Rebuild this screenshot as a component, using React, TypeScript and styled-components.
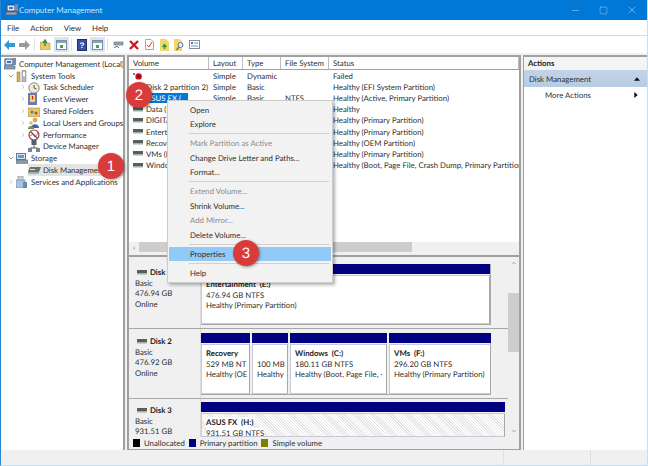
import React from 'react';
import styled, { createGlobalStyle } from 'styled-components';
import { ChevronDown, ChevronRight, Minus, Square, X } from 'lucide-react';

const Global = createGlobalStyle`
  html, body { margin: 0; padding: 0; background: #fff; }
  * { box-sizing: border-box; }
  body { text-rendering: geometricPrecision; }
`;

const AppIcon = () => (
  <svg width="12" height="12" viewBox="0 0 12 12">
    <rect x="1" y="1" width="8" height="6" fill="#dfe8f4" stroke="#33507c" />
    <rect x="3" y="3" width="4" height="2" fill="#3f79c4" />
    <rect x="0" y="8" width="11" height="3" fill="#8fa0b8" stroke="#46597a" strokeWidth=".6" />
    <rect x="9" y="0" width="3" height="7" fill="#7a8aa4" />
  </svg>
);

const Arrow = ({ color, flip }: { color: string; flip?: boolean }) => (
  <svg width="11" height="10" viewBox="0 0 11 10" style={flip ? { transform: 'scaleX(-1)' } : undefined}>
    <path d="M0 5 L5 0 V3 H11 V7 H5 V10 Z" fill={color} />
  </svg>
);

const FolderUp = () => (
  <svg width="11" height="11" viewBox="0 0 11 11">
    <path d="M0 3 H4 L5 4 H10 V11 H0 Z" fill="#e9c968" stroke="#b5953c" strokeWidth=".6" />
    <path d="M5 7 L5 2 M3 4 L5 1 L7 4" stroke="#3b8f3b" strokeWidth="1.4" fill="none" />
  </svg>
);

const PaneIcon = () => (
  <svg width="11" height="10" viewBox="0 0 11 10">
    <rect x=".5" y=".5" width="10" height="9" fill="#fff" stroke="#7d8ea0" />
    <rect x="1" y="1" width="9" height="2" fill="#8fa3b8" />
    <rect x="4" y="5" width="3" height="3" fill="#4f9a5a" />
  </svg>
);

const HelpBook = () => (
  <svg width="10" height="12" viewBox="0 0 10 12">
    <rect x=".5" y=".5" width="9" height="11" fill="#3a4fa8" stroke="#1f2d75" />
    <text x="5" y="9" textAnchor="middle" fontSize="8" fontFamily="Liberation Sans" fontWeight="700" fill="#fff">?</text>
  </svg>
);

const Connect = () => (
  <svg width="11" height="10" viewBox="0 0 11 10">
    <rect x="1" y="2" width="9" height="3" fill="#9aa6ae" stroke="#5f6b74" strokeWidth=".6" />
    <path d="M1 8 L4 6 L6 8" stroke="#4a7f9a" fill="none" />
  </svg>
);

const RedX = () => (
  <svg width="10" height="10" viewBox="0 0 10 10">
    <path d="M1 1 L9 9 M9 1 L1 9" stroke="#cf1b1b" strokeWidth="2.4" />
  </svg>
);

const CheckDoc = () => (
  <svg width="9" height="11" viewBox="0 0 9 11">
    <path d="M.5 .5 H6 L8.5 3 V10.5 H.5 Z" fill="#fff" stroke="#a8a8a8" />
    <path d="M2 6 L4 8 L7 3" stroke="#d2442f" fill="none" />
  </svg>
);

const DocUp = () => (
  <svg width="9" height="12" viewBox="0 0 9 12">
    <path d="M0 0 H6 L9 3 V12 H0 Z" fill="#f5d56e" />
    <path d="M4.5 10 V6 M2.5 8 L4.5 5.5 L6.5 8" stroke="#2f9a3a" strokeWidth="1.4" fill="none" />
  </svg>
);

const DocSearch = () => (
  <svg width="11" height="12" viewBox="0 0 11 12">
    <path d="M0 0 H6 L8 2 V12 H0 Z" fill="#f5d56e" />
    <circle cx="6.5" cy="6" r="2.5" fill="#e6f0f8" stroke="#5a7690" />
    <path d="M5 8 L2.5 11" stroke="#5a7690" strokeWidth="1.3" />
  </svg>
);

const PropsIcon = () => (
  <svg width="11" height="9" viewBox="0 0 11 9">
    <rect x=".5" y=".5" width="10" height="8" fill="#fff" stroke="#7d8ea0" />
    <rect x="2" y="2" width="2" height="2" fill="#4a7fb5" />
    <path d="M5 3 H9 M2 6 H9" stroke="#7d8ea0" />
  </svg>
);

const DriveIcon = () => (
  <svg width="10" height="7" viewBox="0 0 10 7">
    <rect x="0" y="1" width="10" height="3" fill="#55605c" />
    <rect x="0" y="4" width="10" height="1.5" fill="#9fb0a6" />
  </svg>
);

const FailedIcon = () => (
  <svg width="10" height="8" viewBox="0 0 10 8">
    <circle cx="5.6" cy="4.4" r="3.2" fill="#c20e22" />
    <circle cx="5.6" cy="4.4" r="1" fill="#3a1015" />
    <rect x="0" y="1" width="2" height="2" fill="#777" />
  </svg>
);

const ToolsIcon = () => (
  <svg width="11" height="12" viewBox="0 0 11 12">
    <rect x="1" y="2" width="3" height="10" fill="#d7b04d" stroke="#8c7430" strokeWidth=".5" />
    <rect x="6" y="0" width="4" height="12" fill="#b5bcc4" stroke="#6d747c" strokeWidth=".5" />
    <rect x="7" y="2" width="2" height="4" fill="#fff" />
  </svg>
);

const ClockIcon = () => (
  <svg width="12" height="12" viewBox="0 0 12 12">
    <circle cx="6" cy="6" r="5.2" fill="#f1ead8" stroke="#8a8a80" />
    <path d="M6 3 V6 L8.5 7" stroke="#555" fill="none" />
  </svg>
);

const ViewerIcon = () => (
  <svg width="10" height="12" viewBox="0 0 10 12">
    <rect x="0" y="0" width="9" height="12" fill="#6f79b5" />
    <rect x="2" y="2" width="5" height="7" fill="#f1d675" />
    <path d="M4.5 3 V6.5" stroke="#c22" strokeWidth="1.3" />
  </svg>
);

const SharedIcon = () => (
  <svg width="12" height="11" viewBox="0 0 12 11">
    <rect x="0" y="2" width="12" height="9" fill="#e4c66c" stroke="#a48b3d" strokeWidth=".6" />
    <circle cx="4" cy="6" r="1.5" fill="#4d7fae" />
    <circle cx="8" cy="7" r="1.5" fill="#b5533d" />
  </svg>
);

const UsersIcon = () => (
  <svg width="12" height="12" viewBox="0 0 12 12">
    <circle cx="7" cy="3" r="2.4" fill="#d9a66a" />
    <path d="M3 11 C3 6 11 6 11 11 Z" fill="#3e62a8" />
    <circle cx="3" cy="6" r="1.8" fill="#e2b67c" />
    <path d="M0 12 C0 8 6 8 6 12 Z" fill="#5f9a55" />
  </svg>
);

const PerfIcon = () => (
  <svg width="12" height="12" viewBox="0 0 12 12">
    <circle cx="6" cy="6" r="5" fill="#fff" stroke="#b8363a" strokeWidth="1.2" />
    <path d="M3 3 L9 9" stroke="#b8363a" strokeWidth="1.2" />
    <path d="M2 7 L5 5 L7 8 L10 4" stroke="#38506e" strokeWidth=".7" fill="none" />
  </svg>
);

const DeviceIcon = () => (
  <svg width="12" height="12" viewBox="0 0 12 12">
    <rect x="3.5" y="0" width="5" height="5" fill="#555e6e" />
    <path d="M6 5 V8 M2 8 H10" stroke="#555" />
    <rect x="0" y="8" width="4" height="4" fill="#7a8496" />
    <rect x="8" y="8" width="4" height="4" fill="#7a8496" />
  </svg>
);

const StorageIcon = () => (
  <svg width="12" height="11" viewBox="0 0 12 11">
    <rect x=".5" y=".5" width="9" height="6" fill="#d8e6f4" stroke="#5a7a9c" />
    <rect x="2" y="2" width="6" height="3" fill="#55a0c8" />
    <rect x="0" y="7" width="12" height="3.5" fill="#8d9aa8" stroke="#566472" strokeWidth=".5" />
  </svg>
);

const DiskNodeIcon = () => (
  <svg width="13" height="9" viewBox="0 0 13 9">
    <path d="M2 1 H13 L11 6 H0 Z" fill="#6a736e" />
    <rect x="0" y="6" width="11" height="2" fill="#a4b0a8" />
    <rect x="2" y="3" width="5" height="1" fill="#dfe6e2" />
  </svg>
);

const ServicesIcon = () => (
  <svg width="11" height="12" viewBox="0 0 11 12">
    <rect x="2" y="0" width="5" height="8" fill="#cdd6de" stroke="#74838f" strokeWidth=".6" />
    <rect x="0" y="4" width="9" height="8" fill="#a9c4dc" stroke="#5f7f9c" strokeWidth=".6" />
    <rect x="7" y="6" width="4" height="6" fill="#5f8fb8" />
  </svg>
);

const treeNodes = [
  { label: 'System Tools', depth: 1, caret: 'open', icon: <ToolsIcon /> },
  { label: 'Task Scheduler', depth: 2, caret: 'closed', icon: <ClockIcon /> },
  { label: 'Event Viewer', depth: 2, caret: 'closed', icon: <ViewerIcon /> },
  { label: 'Shared Folders', depth: 2, caret: 'closed', icon: <SharedIcon /> },
  { label: 'Local Users and Groups', depth: 2, caret: 'closed', icon: <UsersIcon /> },
  { label: 'Performance', depth: 2, caret: 'closed', icon: <PerfIcon /> },
  { label: 'Device Manager', depth: 2, icon: <DeviceIcon /> },
  { label: 'Storage', depth: 1, caret: 'open', icon: <StorageIcon /> },
  { label: 'Disk Management', depth: 2, icon: <DiskNodeIcon />, active: true },
  { label: 'Services and Applications', depth: 1, caret: 'closed', icon: <ServicesIcon /> },
];

const volumes = [
  { name: '', layout: 'Simple', type: 'Dynamic', fs: '', status: 'Failed', failed: true },
  { name: '(Disk 2 partition 2)', layout: 'Simple', type: 'Basic', fs: '', status: 'Healthy (EFI System Partition)' },
  { name: 'ASUS FX (...', layout: 'Simple', type: 'Basic', fs: 'NTFS', status: 'Healthy (Active, Primary Partition)', selected: true },
  { name: 'Data (D:)', layout: 'Simple', type: 'Basic', fs: 'NTFS', status: 'Healthy' },
  { name: 'DIGITAL', layout: 'Simple', type: 'Basic', fs: 'NTFS', status: 'Healthy (Primary Partition)' },
  { name: 'Entertainment', layout: 'Simple', type: 'Basic', fs: 'NTFS', status: 'Healthy (Primary Partition)' },
  { name: 'Recovery', layout: 'Simple', type: 'Basic', fs: 'NTFS', status: 'Healthy (OEM Partition)' },
  { name: 'VMs (F:)', layout: 'Simple', type: 'Basic', fs: 'NTFS', status: 'Healthy (Primary Partition)' },
  { name: 'Windows (C:)', layout: 'Simple', type: 'Basic', fs: 'NTFS', status: 'Healthy (Boot, Page File, Crash Dump, Primary Partition)' },
];

const columns = [
  { label: 'Volume', width: 80 },
  { label: 'Layout', width: 34 },
  { label: 'Type', width: 38 },
  { label: 'File System', width: 48 },
  { label: 'Status', width: 190 },
];

const menuItems = [
  { label: 'Open' },
  { label: 'Explore' },
  { sep: true },
  { label: 'Mark Partition as Active', off: true },
  { label: 'Change Drive Letter and Paths...' },
  { label: 'Format...' },
  { sep: true },
  { label: 'Extend Volume...', off: true },
  { label: 'Shrink Volume...' },
  { label: 'Add Mirror...', off: true },
  { label: 'Delete Volume...' },
  { sep: true },
  { label: 'Properties', hot: true },
  { sep: true },
  { label: 'Help' },
];

const App = () => (
  <Window>
    <Global />
    <TitleBar>
      <AppIcon />
      <TitleText>Computer Management</TitleText>
      <Caption>
        <Minus size={11} strokeWidth={1} />
        <Square size={9} strokeWidth={1} />
        <X size={12} strokeWidth={1} />
      </Caption>
    </TitleBar>
    <MenuBar>
      {['File', 'Action', 'View', 'Help'].map(m => (
        <span key={m}>{m}</span>
      ))}
    </MenuBar>
    <Toolbar>
      <Tool><Arrow color="#2f9ad8" /></Tool>
      <Tool><Arrow color="#9a9a9a" flip /></Tool>
      <ToolDivider />
      <Tool><FolderUp /></Tool>
      <Tool $on><PaneIcon /></Tool>
      <ToolDivider />
      <Tool><HelpBook /></Tool>
      <Tool $on><PaneIcon /></Tool>
      <ToolDivider />
      <Tool><Connect /></Tool>
      <Tool><RedX /></Tool>
      <Tool><CheckDoc /></Tool>
      <Tool><DocUp /></Tool>
      <Tool><DocSearch /></Tool>
      <Tool><PropsIcon /></Tool>
    </Toolbar>
    <Main>
      <TreePane>
        <TreeRow $depth={0}>
          <TreeIcon><AppIcon /></TreeIcon>
          Computer Management (Local)
        </TreeRow>
        {treeNodes.map(n => (
          <TreeRow key={n.label} $depth={n.depth}>
            <Caret>
              {n.caret === 'open' && <ChevronDown size={8} strokeWidth={1.6} color="#444" />}
              {n.caret === 'closed' && <ChevronRight size={8} strokeWidth={1.4} color="#999" />}
            </Caret>
            <TreeEntry $active={n.active}>
              <TreeIcon>{n.icon}</TreeIcon>
              {n.label}
            </TreeEntry>
          </TreeRow>
        ))}
      </TreePane>

      <Center>
        <VolumeList>
          <HeaderRow>
            {columns.map(c => (
              <HeaderCell key={c.label} $w={c.width}>{c.label}</HeaderCell>
            ))}
          </HeaderRow>
          {volumes.map(v => (
            <VolumeRow key={v.name + v.status}>
              <Cell $w={80}>
                {v.failed ? <FailedIcon /> : <DriveIcon />}
                {v.name && <VolumeName $selected={v.selected}>{v.name}</VolumeName>}
              </Cell>
              <Cell $w={34}>{v.layout}</Cell>
              <Cell $w={38}>{v.type}</Cell>
              <Cell $w={48}>{v.fs}</Cell>
              <Cell $w={190}>{v.status}</Cell>
            </VolumeRow>
          ))}
        </VolumeList>
        <HScroll>
          <HChevron>‹</HChevron>
          <HThumb />
        </HScroll>
        <DiskArea>
          <DiskScroller>
            <DiskRow $h={72}>
              <DiskLabel $top={10}>
                <DiskName><DriveIcon />Disk 1</DiskName>
                <span>Basic</span>
                <span>476.94 GB</span>
                <span>Online</span>
              </DiskLabel>
              <PartitionFrame $top={7}>
                <Partition $w={289}>
                  <PartitionHead />
                  <PartitionBody>
                    <b>Entertainment&nbsp; (E:)</b>
                    <span>476.94 GB NTFS</span>
                    <span>Healthy (Primary Partition)</span>
                  </PartitionBody>
                </Partition>
              </PartitionFrame>
            </DiskRow>
            <DiskRow $h={70}>
              <DiskLabel $top={7}>
                <DiskName><DriveIcon />Disk 2</DiskName>
                <span>Basic</span>
                <span>476.92 GB</span>
                <span>Online</span>
              </DiskLabel>
              <PartitionFrame $top={4}>
                <Partition $w={49}>
                  <PartitionHead />
                  <PartitionBody>
                    <b>Recovery</b>
                    <span>529 MB NT</span>
                    <span>Healthy (OE</span>
                  </PartitionBody>
                </Partition>
                <Partition $w={36}>
                  <PartitionHead />
                  <PartitionBody>
                    <b>&nbsp;</b>
                    <span>100 MB</span>
                    <span>Healthy</span>
                  </PartitionBody>
                </Partition>
                <Partition $w={97}>
                  <PartitionHead />
                  <PartitionBody>
                    <b>Windows&nbsp; (C:)</b>
                    <span>180.11 GB NTFS</span>
                    <span>Healthy (Boot, Page File, ·</span>
                  </PartitionBody>
                </Partition>
                <Partition $w={102}>
                  <PartitionHead />
                  <PartitionBody>
                    <b>VMs&nbsp; (F:)</b>
                    <span>296.20 GB NTFS</span>
                    <span>Healthy (Primary Partition)</span>
                  </PartitionBody>
                </Partition>
              </PartitionFrame>
            </DiskRow>
            <DiskRow $h={38}>
              <DiskLabel $top={6}>
                <DiskName><DriveIcon />Disk 3</DiskName>
                <span>Basic</span>
                <span>931.51 GB</span>
              </DiskLabel>
              <OpenFrame>
                <PartitionHead />
                <HatchedBody>
                  <b>ASUS FX&nbsp; (H:)</b>
                  <span>931.51 GB NTFS</span>
                </HatchedBody>
              </OpenFrame>
            </DiskRow>
          </DiskScroller>
          <VScroll>
            <ChevronWrap><ChevronRight size={6} style={{ transform: 'rotate(-90deg)' }} /></ChevronWrap>
            <VThumb />
            <ChevronWrap><ChevronRight size={6} style={{ transform: 'rotate(90deg)' }} /></ChevronWrap>
          </VScroll>
        </DiskArea>
        <Legend>
          <Swatch $c="#000" /><span>Unallocated</span>
          <Swatch $c="#000080" /><span>Primary partition</span>
          <Swatch $c="#808000" /><span>Simple volume</span>
        </Legend>
      </Center>

      <ActionsPane>
        <ActionsTitle>Actions</ActionsTitle>
        <ActionsBand>
          Disk Management
          <Tri viewBox="0 0 7 4"><path d="M0 4 L3.5 0 L7 4 Z" /></Tri>
        </ActionsBand>
        <ActionsItem>
          More Actions
          <Tri viewBox="0 0 4 7"><path d="M0 0 L4 3.5 L0 7 Z" /></Tri>
        </ActionsItem>
      </ActionsPane>
    </Main>
    <StatusBar>
      <StatusCell $w={503} />
      <StatusCell $w={87} />
      <StatusCell $w={58} />
    </StatusBar>

    <ContextMenu>
      {menuItems.map((m, i) =>
        m.sep ? (
          <MenuSep key={i} />
        ) : (
          <MenuItem key={m.label} $off={m.off} $hot={m.hot}>{m.label}</MenuItem>
        )
      )}
    </ContextMenu>
    <Badge $x={111} $y={166}>1</Badge>
    <Badge $x={139} $y={95}>2</Badge>
    <Badge $x={246} $y={253}>3</Badge>
  </Window>
);

const uiFont = `Lato, "Noto Sans", sans-serif`;

const Window = styled.div`
  position: relative;
  width: 648px;
  height: 466px;
  overflow: hidden;
  display: flex;
  flex-direction: column;
  background: #fff;
  font-family: ${uiFont};
  font-size: 7.8px;
  color: #2e2e2e;
  border-left: 1px solid #2a86d0;
  border-right: 1px solid #c6dff0;
  border-bottom: 1px solid #c6dff0;
`;

const TitleBar = styled.div`
  height: 20px;
  flex: none;
  margin-left: -1px;
  margin-right: -1px;
  padding-left: 6px;
  display: flex;
  align-items: center;
  gap: 1px;
  background: #0078d7;
  color: #cfe6fa;
`;

const TitleText = styled.span`
  font-size: 8px;
`;

const Caption = styled.div`
  margin-left: auto;
  width: 78px;
  padding-right: 10px;
  display: flex;
  align-items: center;
  justify-content: space-between;
  color: #cfe6fa;
`;

const MenuBar = styled.div`
  height: 16px;
  flex: none;
  padding-left: 6px;
  display: flex;
  align-items: center;
  gap: 11px;
  border-bottom: 1px solid #d8d8d8;
`;

const Toolbar = styled.div`
  height: 18px;
  flex: none;
  padding-left: 1px;
  display: flex;
  align-items: center;
  border-bottom: 1px solid #f0f0f0;
`;

const Tool = styled.div<{ $on?: boolean }>`
  width: 15.2px;
  height: 15px;
  display: flex;
  align-items: center;
  justify-content: center;
  background: ${p => (p.$on ? '#d5e7f5' : 'transparent')};
`;

const ToolDivider = styled.div`
  width: 1px;
  height: 13px;
  margin: 0 3px 0 2px;
  background: #e2e2e2;
`;

const Main = styled.div`
  flex: 1;
  min-height: 0;
  display: flex;
  gap: 2px;
  background: #f0f0f0;
  padding-top: 1px;
`;

const TreePane = styled.div`
  width: 124px;
  flex: none;
  padding: 1px 0 0 2px;
  background: #fff;
  border-top: 2px solid #a0a0a0;
  border-right: 2px solid #a0a0a0;
  white-space: nowrap;
  overflow: hidden;
`;

const TreeRow = styled.div<{ $depth: number }>`
  height: 11.8px;
  display: flex;
  align-items: center;
  padding-left: ${p => (p.$depth === 2 ? 16 : p.$depth === 1 ? 4 : 1)}px;
`;

const Caret = styled.span`
  width: 9px;
  flex: none;
  display: flex;
  align-items: center;
`;

const TreeEntry = styled.span<{ $active?: boolean }>`
  flex: 1;
  display: flex;
  align-items: center;
  height: 100%;
  background: ${p => (p.$active ? '#e3e3e3' : 'transparent')};
`;

const TreeIcon = styled.span`
  width: 15px;
  flex: none;
  display: flex;
  align-items: center;
`;

const Center = styled.div`
  width: 394px;
  flex: none;
  display: flex;
  flex-direction: column;
  border-top: 2px solid #a0a0a0;
  border-left: 2px solid #a0a0a0;
  border-right: 2px solid #a0a0a0;
  border-bottom: 1px solid #a0a0a0;
  background: #f0f0f0;
`;

const VolumeList = styled.div`
  height: 185px;
  flex: none;
  background: #fff;
  overflow: hidden;
`;

const HeaderRow = styled.div`
  height: 13px;
  display: flex;
  border-bottom: 1px solid #a0a0a0;
`;

const HeaderCell = styled.div<{ $w: number }>`
  width: ${p => p.$w}px;
  flex: none;
  padding-left: 4px;
  border-right: 1px solid #bdbdbd;
  line-height: 12px;
  white-space: nowrap;
  overflow: hidden;
`;

const VolumeRow = styled.div`
  height: 11.2px;
  display: flex;
  align-items: center;
`;

const Cell = styled.div<{ $w: number }>`
  width: ${p => p.$w}px;
  flex: none;
  padding-left: 4px;
  display: flex;
  align-items: center;
  gap: 2px;
  white-space: nowrap;
  overflow: hidden;
`;

const VolumeName = styled.span<{ $selected?: boolean }>`
  padding: 0 1px;
  background: ${p => (p.$selected ? '#0078d7' : 'transparent')};
  color: ${p => (p.$selected ? '#fff' : 'inherit')};
`;

const HScroll = styled.div`
  height: 15px;
  flex: none;
  padding-bottom: 3px;
  display: flex;
  align-items: center;
  background: #f0f0f0;
  border-bottom: 2px solid #a0a0a0;
`;

const HChevron = styled.span`
  width: 10px;
  text-align: center;
  color: #555;
`;

const HThumb = styled.div`
  width: 273px;
  height: 10px;
  background: #cdcdcd;
`;

const DiskArea = styled.div`
  flex: 1;
  min-height: 0;
  display: flex;
  overflow: hidden;
  background: #f0f0f0;
`;

const DiskScroller = styled.div`
  width: 379px;
  flex: none;
  overflow: hidden;
`;

const DiskRow = styled.div<{ $h: number }>`
  height: ${p => p.$h}px;
  display: flex;
  border-bottom: 1px solid #a8a8a8;
  &:last-child {
    border-bottom: 0;
  }
`;

const DiskLabel = styled.div<{ $top: number }>`
  width: 72px;
  flex: none;
  padding: ${p => p.$top}px 0 0 6px;
  display: flex;
  flex-direction: column;
  line-height: 10.6px;
  border-right: 1px solid #dcdcdc;
`;

const DiskName = styled.b`
  display: flex;
  align-items: center;
  gap: 3px;
  padding-left: 2px;
  color: #222;
`;

const PartitionFrame = styled.div<{ $top: number }>`
  margin-top: ${p => p.$top}px;
  margin-bottom: 3px;
  width: 290px;
  display: flex;
  gap: 2px;
  border-right: 1px solid #a8a8a8;
  border-bottom: 1px solid #a8a8a8;
`;

const OpenFrame = styled.div`
  margin-top: 3px;
  width: 304px;
  display: flex;
  flex-direction: column;
`;

const Partition = styled.div<{ $w: number }>`
  width: ${p => p.$w}px;
  flex: none;
  display: flex;
  flex-direction: column;
`;

const PartitionHead = styled.div`
  height: 10px;
  flex: none;
  background: #000080;
`;

const PartitionBody = styled.div`
  flex: 1;
  margin-top: 1px;
  padding: 3px 0 0 4px;
  display: flex;
  flex-direction: column;
  line-height: 10.6px;
  white-space: nowrap;
  overflow: hidden;
  background: #fff;
  border: 1px solid #c8c8d8;
  border-right-color: #a8a8a8;
  b {
    color: #222;
  }
`;

const HatchedBody = styled(PartitionBody)`
  background: repeating-linear-gradient(45deg, #fff 0 1px, #e6e6e6 1px 2px);
  span,
  b {
    align-self: flex-start;
    background: #fff;
  }
`;

const VScroll = styled.div`
  width: 11px;
  flex: none;
  display: flex;
  flex-direction: column;
  align-items: stretch;
  justify-content: space-between;
  color: #555;
`;

const ChevronWrap = styled.div`
  height: 12px;
  display: flex;
  align-items: center;
  justify-content: center;
`;

const VThumb = styled.div`
  height: 59px;
  margin-top: 18px;
  margin-bottom: 67px;
  background: #cdcdcd;
`;

const Legend = styled.div`
  height: 12px;
  flex: none;
  padding-left: 4px;
  display: flex;
  align-items: center;
  gap: 4px;
  background: #f0f0f0;
`;

const Swatch = styled.i<{ $c: string }>`
  width: 7px;
  height: 8px;
  background: ${p => p.$c};
`;

const ActionsPane = styled.div`
  flex: 1;
  background: #fff;
  border-top: 2px solid #a0a0a0;
  border-left: 1px solid #a0a0a0;
`;

const ActionsTitle = styled.div`
  height: 13px;
  padding-left: 4px;
  font-weight: 700;
  line-height: 13px;
  color: #222;
  background: #f4f4f4;
`;

const ActionsBand = styled.div`
  height: 17px;
  padding: 0 7px 0 5px;
  display: flex;
  align-items: center;
  justify-content: space-between;
  background: linear-gradient(#c3d3e6, #b6cce3);
`;

const ActionsItem = styled.div`
  height: 16px;
  padding: 0 8px 0 21px;
  display: flex;
  align-items: center;
  justify-content: space-between;
`;

const Tri = styled.svg`
  height: 6px;
  width: 6px;
  fill: #111;
`;

const StatusBar = styled.div`
  height: 15px;
  flex: none;
  display: flex;
  background: #f0f0f0;
`;

const StatusCell = styled.div<{ $w: number }>`
  width: ${p => p.$w}px;
  flex: none;
  border-right: 1px solid #e0e0e0;
`;

const ContextMenu = styled.div`
  position: absolute;
  left: 166px;
  top: 100px;
  width: 166px;
  height: 183px;
  padding: 1.5px 1px;
  display: flex;
  flex-direction: column;
  background: #f2f2f2;
  border: 1px solid #cccccc;
  box-shadow: 2px 2px 3px rgba(0, 0, 0, 0.3);
`;

const MenuItem = styled.div<{ $off?: boolean; $hot?: boolean }>`
  height: 14.4px;
  flex: none;
  padding-left: 21px;
  line-height: 14.4px;
  color: ${p => (p.$off ? '#8a8a8a' : '#2e2e2e')};
  background: ${p => (p.$hot ? '#91c9f7' : 'transparent')};
`;

const MenuSep = styled.div`
  height: 1px;
  flex: none;
  margin: 2px 2px 2px 20px;
  background: #d0d0d0;
`;

const Badge = styled.div<{ $x: number; $y: number }>`
  position: absolute;
  left: ${p => p.$x - 14}px;
  top: ${p => p.$y - 13}px;
  width: 26px;
  height: 26px;
  display: flex;
  align-items: center;
  justify-content: center;
  border-radius: 50%;
  background: #d93a3a;
  color: #fff;
  font-size: 15px;
  font-family: "Liberation Sans", sans-serif;
  box-shadow: 1px 1px 3px rgba(0, 0, 0, 0.4);
`;

export default App;
